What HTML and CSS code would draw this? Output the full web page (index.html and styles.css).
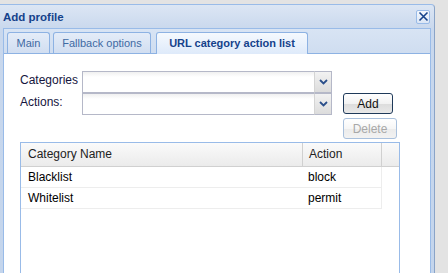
FILE: index.html
```html
<!DOCTYPE html>
<html lang="en">
<head>
    <meta charset="UTF-8">
    <title>Add profile</title>
    <link rel="stylesheet" href="styles.css">
</head>
<body>
    <div class="window">
        <div class="win-header">
            <span class="win-title">Add profile</span>
            <span class="win-close">
                <svg width="11" height="11" viewBox="0 0 11 11"><path d="M1.5 1.5 L9.5 9.5 M9.5 1.5 L1.5 9.5" stroke="#15428b" stroke-width="1.6" fill="none"/></svg>
            </span>
        </div>

        <div class="tabpanel">
            <div class="tab-strip">
                <div class="tab tab-main">Main</div>
                <div class="tab tab-fallback">Fallback options</div>
                <div class="tab tab-active">URL category action list</div>
            </div>

            <div class="tab-body">
                <div class="form-grid">
                    <label class="field-label">Categories</label>
                    <div class="combo">
                        <span class="combo-input"></span>
                        <span class="combo-trigger">
                            <svg width="9" height="6" viewBox="0 0 9 6"><path d="M1 1 L4.5 4.5 L8 1" stroke="#2b4f8b" stroke-width="1.8" fill="none"/></svg>
                        </span>
                    </div>
                    <span></span>

                    <label class="field-label">Actions:</label>
                    <div class="combo">
                        <span class="combo-input"></span>
                        <span class="combo-trigger">
                            <svg width="9" height="6" viewBox="0 0 9 6"><path d="M1 1 L4.5 4.5 L8 1" stroke="#2b4f8b" stroke-width="1.8" fill="none"/></svg>
                        </span>
                    </div>
                    <button class="btn btn-add">Add</button>

                    <span></span>
                    <span></span>
                    <button class="btn btn-delete" disabled>Delete</button>
                </div>

                <div class="grid">
                    <div class="grid-head">
                        <div class="col-name">Category Name</div>
                        <div class="col-action">Action</div>
                        <div class="col-filler"></div>
                    </div>
                    <div class="grid-row">
                        <div class="col-name">Blacklist</div>
                        <div class="col-action">block</div>
                    </div>
                    <div class="grid-row">
                        <div class="col-name">Whitelist</div>
                        <div class="col-action">permit</div>
                    </div>
                </div>
            </div>
        </div>
    </div>
</body>
</html>
```

FILE: styles.css
```css
body {
    margin: 0;
    background-color: #e3e3e3;
    font-family: "Liberation Sans", Arial, sans-serif;
    font-size: 12px;
    overflow: hidden;
}
.window {
    margin-top: 4px;
    width: 434px;
    height: 275px;
    background: linear-gradient(#dce6f4, #c9d8ed 24px, #c4d5ec);
    border: 1px solid #99bbe8;
    border-left: none;
    border-right-color: #8aa4c8;
    border-radius: 0 4px 0 0;
    display: flex;
    flex-direction: column;
}
.win-header {
    flex-shrink: 0;
    height: 23px;
    display: flex;
    align-items: center;
    justify-content: space-between;
    padding: 0 4px 0 3px;
}
.win-title {
    font-weight: bold;
    font-size: 11.5px;
    color: #15428b;
    margin-top: 1px;
}
.win-close {
    width: 12px;
    height: 12px;
    border: 1px solid #99bbe8;
    border-radius: 2px;
    background: linear-gradient(#f4f8fd, #dbe6f5);
    display: flex;
    align-items: center;
    justify-content: center;
}
.tabpanel {
    flex: 1;
    min-height: 0;
    margin: 0 3px 0 3px;
    border: 1px solid #99bbe8;
    border-bottom: none;
    display: flex;
    flex-direction: column;
}
.tab-strip {
    flex-shrink: 0;
    height: 22px;
    padding: 2px 0 0 3px;
    background: linear-gradient(#d8e4f4, #cfddf0);
    border-bottom: 1px solid #8db2e3;
    display: flex;
    gap: 3px;
    align-items: flex-end;
}
.tab {
    height: 21px;
    box-sizing: border-box;
    border: 1px solid #8db2e3;
    border-bottom: none;
    border-radius: 3px 3px 0 0;
    background: linear-gradient(#e4ecf8, #d1def1);
    color: #416aa3;
    font-size: 11px;
    line-height: 20px;
    text-align: center;
}
.tab-main {
    width: 43px;
}
.tab-fallback {
    width: 98px;
}
.tab-active {
    width: 152px;
    height: 22px;
    margin-left: 2px;
    margin-bottom: -1px;
    background: linear-gradient(#f5f9fe, #deeafa);
    color: #15428b;
    font-weight: bold;
    line-height: 21px;
}
.tab-body {
    flex: 1;
    min-height: 0;
    overflow: hidden;
    background-color: #fff;
    padding: 17px 0 0 16px;
}
.form-grid {
    display: grid;
    grid-template-columns: 62px 250px auto;
    grid-template-rows: 22px 22px 24px;
    align-items: start;
}
.field-label {
    color: #15153d;
    font-size: 12px;
    line-height: 19px;
}
.combo {
    display: flex;
    height: 22px;
}
.combo-input {
    flex: 1;
    border: 1px solid #b5b8c8;
    border-right: none;
    background: linear-gradient(#f0f0f0, #fff 5px);
}
.combo-trigger {
    width: 16px;
    border: 1px solid #b5b8c8;
    border-left: 1px solid #d4d4d4;
    background: linear-gradient(#f2f2f2, #dcdcdc);
    display: flex;
    align-items: center;
    justify-content: center;
}
.btn {
    font-family: "Liberation Sans", Arial, sans-serif;
    font-size: 12px;
    height: 21px;
    padding: 0;
    border-radius: 3px;
    background: linear-gradient(#ffffff, #f2f2f2 50%, #dcdcdc 51%, #e8e8e8);
    margin-left: 11px;
    justify-self: start;
}
.btn-add {
    width: 50px;
    border: 1px solid #1f3a5a;
    color: #111;
}
.btn-delete {
    width: 54px;
    margin-top: 3px;
    border: 1px solid #a9c0dc;
    color: #a8a8a8;
    background: linear-gradient(#ffffff, #f6f6f6 50%, #ebebeb 51%, #f2f2f2);
}
.grid {
    margin-top: 3px;
    width: 378px;
    height: 140px;
    border: 1px solid #99bbe8;
}
.grid-head {
    display: flex;
    height: 23px;
    background: linear-gradient(#fafafa, #ebebeb);
    border-bottom: 1px solid #d0d0d0;
}
.grid-head div {
    line-height: 23px;
    color: #222;
}
.col-name {
    width: 281px;
    box-sizing: border-box;
    padding-left: 7px;
}
.col-action {
    width: 79px;
    box-sizing: border-box;
    padding-left: 6px;
}
.grid-head .col-action,
.grid-head .col-filler {
    border-left: 1px solid #d0d0d0;
}
.col-filler {
    flex: 1;
}
.grid-row {
    display: flex;
    width: 360px;
    height: 20px;
    border-bottom: 1px solid #ededed;
    border-right: 1px solid #ededed;
}
.grid-row div {
    line-height: 20px;
    color: #000;
}
```
